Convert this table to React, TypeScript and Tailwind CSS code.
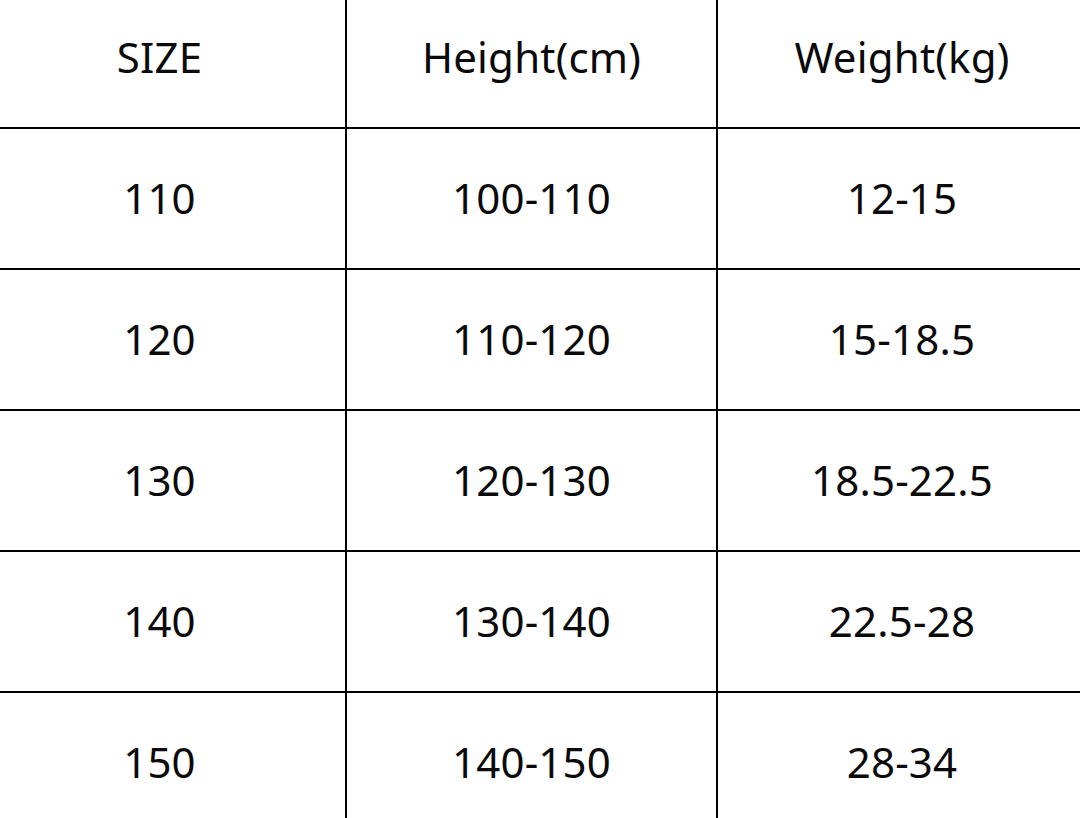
const rows = [
  ['110', '100-110', '12-15'],
  ['120', '110-120', '15-18.5'],
  ['130', '120-130', '18.5-22.5'],
  ['140', '130-140', '22.5-28'],
  ['150', '140-150', '28-34'],
];

const header = ['SIZE', 'Height(cm)', 'Weight(kg)'];

function Cell({ text, last }: { text: string; last: boolean }) {
  return (
    <div
      className={`flex h-[141px] items-center justify-center border-b-2 border-black pb-[2px] ${last ? '' : 'border-r-2'}`}
    >
      {text}
    </div>
  );
}

export default function App() {
  return (
    <div className="h-[818px] w-[1080px] overflow-hidden bg-white">
      <div
        className="ml-[-26px] mt-[-12px] grid w-[1112px] grid-cols-[373px_371px_368px] text-[42px] tracking-[0.2px] text-[#0a0a0a]"
        style={{ fontFamily: '"Noto Sans", "Open Sans", sans-serif' }}
      >
        {header.map((h, i) => (
          <Cell key={h} text={h} last={i === 2} />
        ))}
        {rows.map((r) =>
          r.map((v, i) => <Cell key={r[0] + '-' + i} text={v} last={i === 2} />)
        )}
      </div>
    </div>
  );
}
